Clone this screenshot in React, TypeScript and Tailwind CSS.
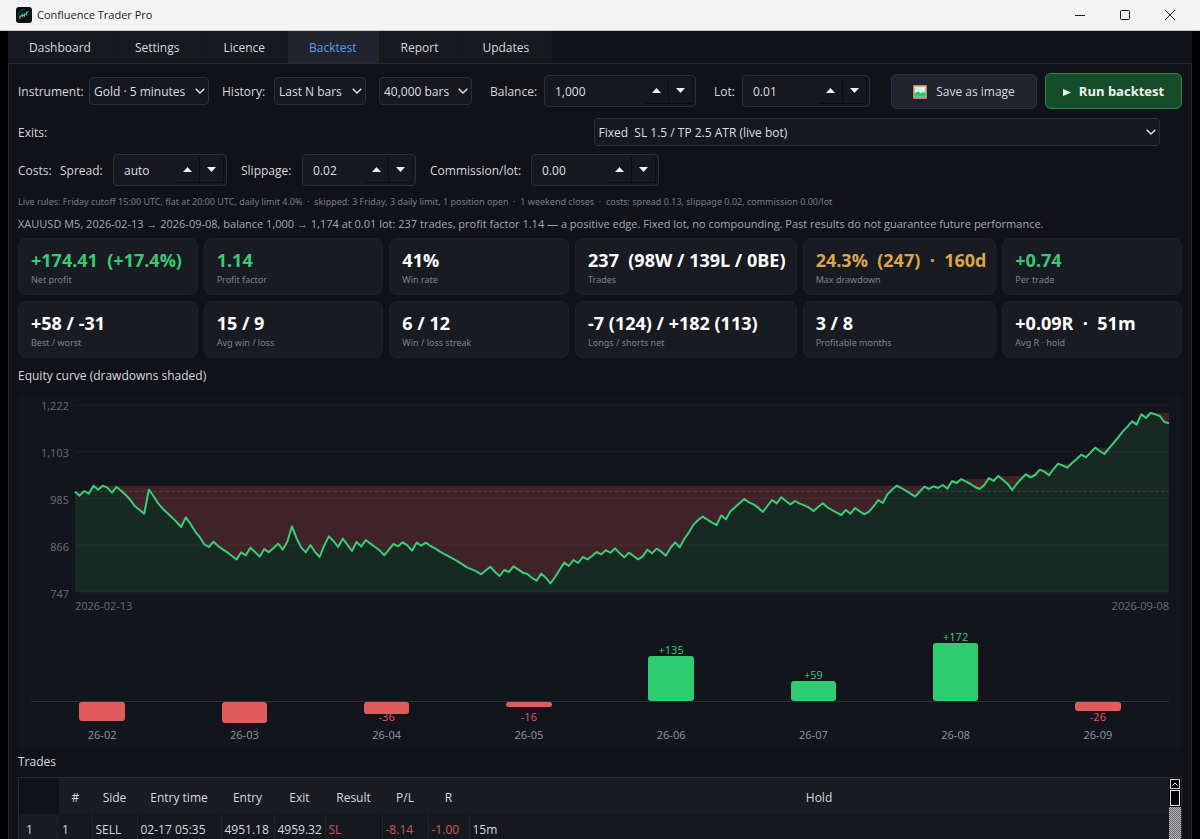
import type { ReactNode } from "react";
import clsx from "clsx";

const tabs = ["Dashboard", "Settings", "Licence", "Backtest", "Report", "Updates"];

const stats = [
  { value: "+174.41  (+17.4%)", label: "Net profit", tone: "good" },
  { value: "1.14", label: "Profit factor", tone: "good" },
  { value: "41%", label: "Win rate" },
  { value: "237  (98W / 139L / 0BE)", label: "Trades" },
  { value: "24.3%  (247)  ·  160d", label: "Max drawdown", tone: "warn" },
  { value: "+0.74", label: "Per trade", tone: "good" },
  { value: "+58 / -31", label: "Best / worst" },
  { value: "15 / 9", label: "Avg win / loss" },
  { value: "6 / 12", label: "Win / loss streak" },
  { value: "-7 (124) / +182 (113)", label: "Longs / shorts net" },
  { value: "3 / 8", label: "Profitable months" },
  { value: "+0.09R  ·  51m", label: "Avg R · hold" },
];

// one y value per closed trade, in viewBox units (smaller = higher equity)
const curve = [
  305, 317, 303, 311, 287, 299, 287, 293, 308, 291, 302, 315, 330, 349, 360, 371, 299, 318, 340, 356,
  369, 382, 396, 411, 382, 401, 424, 441, 463, 471, 455, 468, 478, 487, 498, 508, 487, 496, 473, 486,
  500, 477, 487, 474, 461, 479, 455, 409, 445, 472, 487, 465, 486, 501, 466, 439, 453, 471, 446, 464,
  483, 456, 470, 450, 461, 471, 481, 496, 479, 462, 469, 457, 466, 482, 458, 467, 458, 468, 475, 484,
  492, 499, 507, 515, 524, 533, 538, 545, 553, 541, 530, 546, 558, 540, 546, 529, 538, 548, 552, 564,
  572, 551, 563, 580, 561, 539, 518, 528, 510, 519, 501, 508, 498, 486, 493, 481, 488, 475, 490, 502,
  488, 498, 508, 499, 479, 490, 476, 485, 497, 474, 457, 472, 447, 427, 404, 390, 380, 389, 398, 405,
  376, 388, 364, 352, 339, 327, 337, 343, 353, 366, 348, 330, 340, 322, 333, 343, 333, 341, 346, 353,
  363, 351, 340, 352, 360, 368, 375, 360, 371, 354, 364, 373, 365, 349, 330, 339, 313, 299, 287, 294,
  302, 311, 320, 305, 290, 297, 289, 294, 285, 296, 273, 279, 267, 275, 282, 291, 297, 285, 264, 273,
  258, 269, 281, 300, 282, 266, 253, 262, 255, 239, 245, 256, 237, 221, 227, 233, 219, 207, 194, 202,
  188, 173, 183, 192, 175, 159, 142, 124, 110, 94, 104, 73, 84, 69, 73, 78, 96, 100,
];

const months = [
  { month: "26-02", pl: -55 },
  { month: "26-03", pl: -61 },
  { month: "26-04", pl: -36, label: "-36" },
  { month: "26-05", pl: -16, label: "-16" },
  { month: "26-06", pl: 135, label: "+135" },
  { month: "26-07", pl: 59, label: "+59" },
  { month: "26-08", pl: 172, label: "+172" },
  { month: "26-09", pl: -26, label: "-26" },
];

const columns = ["#", "Side", "Entry time", "Entry", "Exit", "Result", "P/L", "R", "Hold"];

function Select({ id, label, value, className }: { id: string; label?: string; value: string; className: string }) {
  return (
    <div className={clsx("grid items-center", className)}>
      <select
        id={id}
        aria-label={label}
        className="col-start-1 row-start-1 h-7 w-full appearance-none rounded border border-[#2c3036] bg-[#15191f] pl-1 pr-4 pt-[2px] text-[#dcdee3]"
      >
        <option>{value}</option>
      </select>
      <svg
        viewBox="0 0 10 6"
        className="pointer-events-none col-start-1 row-start-1 mr-1 h-[6px] w-[10px] justify-self-end"
        fill="none"
        stroke="#e8e8ea"
        strokeWidth="1.3"
      >
        <path d="M.7.7 5 5 9.3.7" />
      </svg>
    </div>
  );
}

function Spin({ id, value, className }: { id: string; value: string; className: string }) {
  return (
    <div className={clsx("flex h-8 items-center rounded border border-[#2c3036] bg-[#15191f] pr-[2px]", className)}>
      <input
        id={id}
        defaultValue={value}
        className="w-0 min-w-0 flex-1 bg-transparent pl-[10px] pt-[2px] text-[#dcdee3] outline-none"
      />
      <button aria-label="Increase" className="flex h-[26px] w-6 items-center justify-center border-b border-r border-[#0b0d11]">
        <svg viewBox="0 0 9 5" className="h-[5px] w-[9px]" fill="#f0f0f2">
          <path d="M0 5 4.5 0 9 5Z" />
        </svg>
      </button>
      <button aria-label="Decrease" className="flex h-[26px] w-6 items-center justify-center border-b border-r border-[#0b0d11]">
        <svg viewBox="0 0 9 5" className="h-[5px] w-[9px]" fill="#f0f0f2">
          <path d="M0 0h9L4.5 5Z" />
        </svg>
      </button>
    </div>
  );
}

function Label({ htmlFor, className, children }: { htmlFor: string; className?: string; children: ReactNode }) {
  return (
    <label htmlFor={htmlFor} className={clsx("shrink-0 whitespace-nowrap pt-[2px]", className)}>
      {children}
    </label>
  );
}

function TitleBar() {
  return (
    <header className="flex h-[31px] shrink-0 items-center border-b border-[#c9c9c9] bg-[#f3f3f3] pl-4 text-[#1b1b1b]">
      <svg viewBox="0 0 16 16" className="h-4 w-4">
        <rect width="16" height="16" rx="3" fill="#0b1016" />
        <path d="M2.5 8A6 6 0 0 1 9 2.6" stroke="#1c4a66" strokeWidth="1" fill="none" />
        <path d="M4 8.5v3M6.2 6.5v4M8.4 6v3.5M10.6 4.5v4" stroke="#2fae5f" strokeWidth="1.3" />
        <path d="M3.4 10.4 6 8l2.2.6L12.6 4" stroke="#7fdc8f" strokeWidth=".9" fill="none" />
        <path d="M4 11v1.2M8.4 9v1.2" stroke="#c9504c" strokeWidth="1.2" />
      </svg>
      <h1 className="ml-[5px] flex-1 pt-px text-[11px]">Confluence Trader Pro</h1>
      <button aria-label="Minimize" className="flex h-full w-[45px] items-center justify-center">
        <svg viewBox="0 0 10 10" className="h-[10px] w-[10px]" stroke="#1b1b1b" fill="none">
          <path d="M0 5.5h10" />
        </svg>
      </button>
      <button aria-label="Maximize" className="flex h-full w-[45px] items-center justify-center">
        <svg viewBox="0 0 10 10" className="h-[10px] w-[10px]" stroke="#1b1b1b" fill="none">
          <rect x=".5" y=".5" width="9" height="9" rx="1" />
        </svg>
      </button>
      <button aria-label="Close" className="mr-2 flex h-full w-[45px] items-center justify-center">
        <svg viewBox="0 0 10 10" className="h-[10px] w-[10px]" stroke="#1b1b1b" fill="none">
          <path d="M0 0l10 10M10 0 0 10" />
        </svg>
      </button>
    </header>
  );
}

function EquityChart() {
  const width = 3282;
  const step = width / (curve.length - 1);
  const points = curve.map((y, i) => `${(i * step).toFixed(1)},${y}`);

  // running best equity, used as the upper edge of the drawdown shading
  let best = curve[0];
  const peaks = curve.map((y, i) => {
    best = Math.min(best, y);
    return `${(i * step).toFixed(1)},${best}`;
  });

  return (
    <section className="flex bg-[#12161c] pb-[10px] pr-[13px] pt-[10px] text-[11px] leading-4 text-[#696d7a]">
      <div className="-my-[7px] flex w-[57px] shrink-0 flex-col justify-between self-start pr-[6px] text-right">
        {["1,222", "1,103", "985", "866", "747"].map((tick) => (
          <span key={tick} className="mb-[31px] last:mb-0">
            {tick}
          </span>
        ))}
      </div>
      <div className="min-w-0 flex-1">
        <svg viewBox={`0 45 ${width} 561`} preserveAspectRatio="none" className="block h-[187px] w-full overflow-visible">
          <polygon points={`0,606 ${points.join(" ")} ${width},606`} fill="#182823" />
          <polygon points={`${peaks.join(" ")} ${[...points].reverse().join(" ")}`} fill="#402329" />
          {[45, 185, 325, 465, 606].map((y) => (
            <path key={y} d={`M0 ${y}H${width}`} stroke="#fff" strokeOpacity=".05" vectorEffect="non-scaling-stroke" />
          ))}
          <path
            d={`M0 304H${width}`}
            stroke="#8b95a0"
            strokeOpacity=".25"
            strokeDasharray="4 2"
            vectorEffect="non-scaling-stroke"
          />
          <polyline
            points={points.join(" ")}
            fill="none"
            stroke="#37cf76"
            strokeWidth="2"
            strokeLinejoin="round"
            vectorEffect="non-scaling-stroke"
          />
        </svg>
        <div className="flex justify-between pt-[6px]">
          <span>2026-02-13</span>
          <span>2026-09-08</span>
        </div>
      </div>
    </section>
  );
}

function MonthlyChart() {
  return (
    <section className="bg-[#12161c] px-[13px] text-[11px] leading-4">
      <div className="flex h-[78px] items-end border-b border-[#2c3037]">
        {months.map((m) => (
          <div key={m.month} className="flex flex-1 flex-col items-center">
            {m.pl > 0 && (
              <>
                <span className="-mb-[2px] text-[#37cf76]">{m.label}</span>
                <div className="w-[32%] rounded-[3px] bg-[#2ecc71]" style={{ height: Math.round(m.pl * 0.337) }} />
              </>
            )}
          </div>
        ))}
      </div>
      <div className="flex">
        {months.map((m) => (
          <div key={m.month} className="flex flex-1 flex-col items-center">
            <div className="relative flex h-[25px] w-full flex-col items-center">
              {m.pl < 0 && (
                <>
                  <span className="absolute bottom-[2px] text-[#e05c5c]">{m.label}</span>
                  <div className="relative w-[32%] rounded-[3px] bg-[#e05c5c]" style={{ height: Math.round(-m.pl * 0.337) }} />
                </>
              )}
            </div>
            <span className="pb-[6px] text-[#9095a3]">{m.month}</span>
          </div>
        ))}
      </div>
    </section>
  );
}

function TradesTable() {
  return (
    <section className="flex min-h-16 flex-1 overflow-hidden border border-b-0 border-[#2a2d33] bg-[#15191f]">
      <table className="w-full table-fixed self-start">
        <colgroup>
          <col className="w-[40px]" />
          <col className="w-[33px]" />
          <col className="w-[45px]" />
          <col className="w-[84px]" />
          <col className="w-[53px]" />
          <col className="w-[51px]" />
          <col className="w-[57px]" />
          <col className="w-[46px]" />
          <col className="w-[41px]" />
          <col />
        </colgroup>
        <thead>
          <tr className="h-9 bg-[#191c22]">
            <td className="bg-[#101218]" />
            {columns.map((name) => (
              <th key={name} className="whitespace-nowrap p-0 pt-1 text-center font-normal">
                {name}
              </th>
            ))}
          </tr>
        </thead>
        <tbody>
          <tr className="h-8 whitespace-nowrap [&>td]:border-r [&>td]:border-[#22262c] [&>td]:pl-[3px] [&>td:last-child]:border-r-0">
            <th className="bg-[#191c22] pl-[7px] text-left font-normal">1</th>
            <td>1</td>
            <td>SELL</td>
            <td>02-17 05:35</td>
            <td>4951.18</td>
            <td>4959.32</td>
            <td className="text-[#d05558]">SL</td>
            <td className="text-[#d05558]">-8.14</td>
            <td className="text-[#d05558]">-1.00</td>
            <td>15m</td>
          </tr>
        </tbody>
      </table>
      <div className="flex w-3 shrink-0 flex-col items-center bg-black">
        <button aria-label="Scroll up" className="mt-px flex h-[10px] w-[10px] shrink-0 items-center justify-center border border-[#d8d8d8]">
          <svg viewBox="0 0 6 4" className="h-1 w-[6px]" stroke="#f0f0f0" fill="none">
            <path d="M.5 3.5 3 1l2.5 2.5" />
          </svg>
        </button>
        <div className="my-px h-4 w-[10px] shrink-0 border border-[#e4e4e4]" />
        <div className="w-full flex-1 bg-[repeating-conic-gradient(#b4b4b4_0_25%,#6a6a6a_0_50%)] bg-[length:2px_2px]" />
      </div>
    </section>
  );
}

export default function App() {
  return (
    <div className="flex h-screen min-h-[600px] flex-col overflow-hidden bg-black font-['Open_Sans','Noto_Sans',sans-serif] text-xs text-[#d6d8de]">
      <TitleBar />
      <div className="mx-2 flex min-h-0 flex-1 flex-col bg-[#101218]">
        <nav className="flex h-8 shrink-0">
          {tabs.map((tab) => (
            <button
              key={tab}
              className={clsx(
                "border-r border-[#14171c] pl-[21px] pr-[22px] pt-px",
                tab === "Backtest" ? "bg-[#21242e] text-[#5a9cec]" : "bg-[#161a1f]",
              )}
            >
              {tab}
            </button>
          ))}
        </nav>

        <main className="flex min-h-0 flex-1 flex-col border border-b-0 border-[#26292f] px-[9px]">
          <div className="mt-[9px] flex h-9 shrink-0 items-center">
            <Label htmlFor="instrument" className="w-[71px]">Instrument:</Label>
            <Select id="instrument" value="Gold · 5 minutes" className="w-[120px]" />
            <Label htmlFor="history" className="ml-[13px] w-[52px]">History:</Label>
            <Select id="history" value="Last N bars" className="w-[92px]" />
            <Select id="bars" label="Bars" value="40,000 bars" className="ml-[13px] w-[93px]" />
            <Label htmlFor="balance" className="ml-[18px] w-[54px]">Balance:</Label>
            <Spin id="balance" value="1,000" className="w-[152px]" />
            <Label htmlFor="lot" className="ml-[18px] w-7">Lot:</Label>
            <Spin id="lot" value="0.01" className="w-[128px]" />
            <button className="ml-auto flex h-[35px] w-[146px] items-center justify-center gap-[9px] rounded-md border border-[#2f323c] bg-[#21242e] pt-[2px]">
              <svg viewBox="0 0 14 14" className="h-[14px] w-[14px]">
                <rect width="14" height="14" rx="1" fill="#c08a4e" />
                <rect x="1.5" y="1.5" width="11" height="11" fill="#c9eef2" />
                <path d="M1.5 8.5 5 6.5l3 2 2.5-1.5 2 1v4.5h-11Z" fill="#2fc26b" />
                <path d="M1.5 10.5h11v2h-11Z" fill="#3fd6a0" />
                <circle cx="9.8" cy="4" r="1.3" fill="#fff" />
              </svg>
              Save as image
            </button>
            <button className="ml-2 flex h-9 w-[137px] items-center justify-center gap-2 rounded-md border border-[#2a8a4a] bg-[#154d2b] pt-[2px] text-[13px] font-bold text-[#eef2ef]">
              <svg viewBox="0 0 8 7" className="h-[7px] w-2" fill="#eef2ef">
                <path d="M0 0 8 3.5 0 7Z" />
              </svg>
              Run backtest
            </button>
          </div>

          <div className="mt-[9px] flex h-7 shrink-0 items-center gap-[9px] pr-[22px]">
            <Label htmlFor="exits" className="flex-1">Exits:</Label>
            <Select id="exits" value={"Fixed\u00a0 SL 1.5 / TP 2.5 ATR (live bot)"} className="flex-1" />
          </div>

          <div className="mt-2 flex shrink-0 items-center">
            <span className="w-[42px] pt-[2px]">Costs:</span>
            <Label htmlFor="spread" className="w-[53px]">Spread:</Label>
            <Spin id="spread" value="auto" className="w-[114px]" />
            <Label htmlFor="slippage" className="ml-[14px] w-[61px]">Slippage:</Label>
            <Spin id="slippage" value="0.02" className="w-[114px]" />
            <Label htmlFor="commission" className="ml-[14px] w-[101px]">Commission/lot:</Label>
            <Spin id="commission" value="0.00" className="w-[128px]" />
          </div>

          <p className="mt-2 whitespace-pre font-['Noto_Sans',sans-serif] text-[9px] leading-4 text-[#777b89]">
            {"Live rules: Friday cutoff 15:00 UTC, flat at 20:00 UTC, daily limit 4.0%  ·  skipped: 3 Friday, 3 daily limit, 1 position open  ·  1 weekend closes  ·  costs: spread 0.13, slippage 0.02, commission 0.00/lot"}
          </p>
          <p className="mt-[6px] whitespace-nowrap text-[11px] leading-4 text-[#a3a7b3]">
            XAUUSD M5, 2026-02-13 → 2026-09-08, balance 1,000 → 1,174 at 0.01 lot: 237 trades, profit factor 1.14 — a positive
            edge. Fixed lot, no compounding. Past results do not guarantee future performance.
          </p>

          <div className="mt-[6px] grid shrink-0 grid-cols-[180fr_180fr_180fr_222fr_194fr_180fr] gap-[6px]">
            {stats.map((s) => (
              <div key={s.label} className="h-[57px] min-w-0 rounded-lg border border-[#1f2329] bg-[#181b21] px-3 pt-[9px]">
                <p
                  className={clsx(
                    "whitespace-pre text-lg font-bold leading-6",
                    s.tone === "good" && "text-[#38c978]",
                    s.tone === "warn" && "text-[#dda445]",
                    !s.tone && "text-white",
                  )}
                >
                  {s.value}
                </p>
                <p className="font-['Noto_Sans',sans-serif] text-[9px] leading-4 text-[#7c808e]">{s.label}</p>
              </div>
            ))}
          </div>

          <h2 className="mb-[11px] mt-[10px] leading-4">Equity curve (drawdowns shaded)</h2>
          <EquityChart />
          <MonthlyChart />
          <h2 className="mb-[7px] mt-[5px] leading-4">Trades</h2>
          <TradesTable />
        </main>
      </div>
    </div>
  );
}
